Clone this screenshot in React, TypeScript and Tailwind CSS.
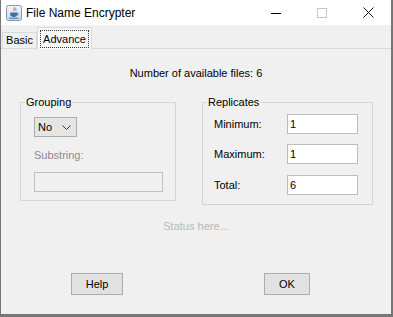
import React from 'react';

const FONT = { fontFamily: '"Liberation Sans", Arial, sans-serif' };

function JavaIcon() {
  return (
    <svg width="16" height="16" viewBox="0 0 16 16" className="ml-[5px] shrink-0">
      <defs>
        <linearGradient id="jbg" x1="0" y1="0" x2="0" y2="1">
          <stop offset="0" stopColor="#f3f7fb" />
          <stop offset="1" stopColor="#c9d7e6" />
        </linearGradient>
      </defs>
      <rect x="0.5" y="0.5" width="15" height="15" rx="2" fill="url(#jbg)" stroke="#8298b0" />
      <path d="M8.2 2.2c1.4 1.2-1.6 2 -0.2 3.6M9.8 3.4c0.8 0.9-1 1.4 0 2.4" fill="none" stroke="#e05a1c" strokeWidth="1" />
      <path d="M4.2 7.4h7v1.8c0 1.8-1.6 2.8-3.5 2.8s-3.5-1-3.5-2.8z" fill="#3a6ea5" />
      <path d="M11.2 8.2c1.4 0 1.4 1.8 0 1.8" fill="none" stroke="#3a6ea5" strokeWidth="0.9" />
      <path d="M3.2 13.2h9.4" stroke="#3a6ea5" strokeWidth="1" />
    </svg>
  );
}

function WindowButtons() {
  return (
    <div className="ml-auto flex h-full">
      <div className="flex w-[46px] items-center justify-center">
        <svg width="10" height="10" viewBox="0 0 10 10">
          <path d="M0 5.5h10" stroke="#000" strokeWidth="1" />
        </svg>
      </div>
      <div className="flex w-[46px] items-center justify-center">
        <svg width="10" height="10" viewBox="0 0 10 10">
          <rect x="0.5" y="0.5" width="9" height="9" fill="none" stroke="#c4c4c4" strokeWidth="1" />
        </svg>
      </div>
      <div className="flex w-[46px] items-center justify-center">
        <svg width="11" height="11" viewBox="0 0 11 11">
          <path d="M0.5 0.5l10 10M10.5 0.5l-10 10" stroke="#111" strokeWidth="1" />
        </svg>
      </div>
    </div>
  );
}

function TextBox({ value }: { value: string }) {
  return (
    <div className="flex h-[20px] w-[71px] items-center border border-[#bcbcbc] bg-white pl-[2px] text-[11px] text-black">
      {value}
    </div>
  );
}

const REPLICATES = [
  { label: 'Minimum:', value: '1', gap: 'mt-[5px]' },
  { label: 'Maximum:', value: '1', gap: 'mt-[10px]' },
  { label: 'Total:', value: '6', gap: 'mt-[11px]' },
];

export default function App() {
  return (
    <div className="h-[317px] w-[393px] bg-white text-black" style={FONT}>
      <div className="flex h-full flex-col border-b-[3px] border-l border-r-2 border-[#767676] bg-[#f0f0f0]">
        {/* Barre de titre */}
        <div className="flex h-[25px] shrink-0 items-center bg-white">
          <JavaIcon />
          <span className="ml-[4px] text-[12px]">File Name Encrypter</span>
          <WindowButtons />
        </div>

        {/* Onglets */}
        <div className="flex h-[23px] shrink-0 items-end pl-[1px]">
          <div className="flex h-[16px] w-[35px] items-center justify-center border border-b-0 border-[#d9d9d9] bg-[#f0f0f0] text-[11px]">
            Basic
          </div>
          <div className="relative z-10 -mb-px flex h-[22px] w-[55px] items-start justify-center border border-b-0 border-[#d9d9d9] bg-[#f9f9f9] pt-[2px] text-[11px]">
            <span className="border border-dotted border-[#333] px-[2px] leading-[16px]">Advance</span>
          </div>
        </div>

        {/* Contenu */}
        <div className="flex flex-1 flex-col border-t border-[#d9d9d9]">
          <p className="mt-[17px] text-center text-[11px] leading-[14px]">Number of available files: 6</p>

          <div className="mt-[15px] flex items-start">
            <fieldset className="ml-[19px] w-[156px] border border-[#d5d5d5] pb-[8px] pl-[13px]">
              <legend className="ml-[-9px] px-[1px] text-[11px] leading-[14px]">Grouping</legend>
              <div className="mt-[8px] flex h-[20px] w-[43px] items-center justify-between border border-[#acacac] bg-[#e5e5e5] pl-[3px] pr-[5px] text-[11px]">
                <span>No</span>
                <svg width="9" height="5" viewBox="0 0 9 5">
                  <path d="M0.5 0.5l4 4 4-4" fill="none" stroke="#333" strokeWidth="1" />
                </svg>
              </div>
              <p className="mt-[11px] text-[11px] leading-[14px] text-[#8c8c8c]">Substring:</p>
              <div className="mt-[10px] h-[20px] w-[129px] border border-[#c0c0c0] bg-[#f0f0f0]" />
            </fieldset>

            <fieldset className="ml-[26px] w-[171px] border border-[#d5d5d5] pb-[9px] pl-[11px]">
              <legend className="ml-[-7px] px-[1px] text-[11px] leading-[14px]">Replicates</legend>
              {REPLICATES.map((row) => (
                <div key={row.label} className={`${row.gap} flex items-center`}>
                  <span className="w-[73px] text-[11px]">{row.label}</span>
                  <TextBox value={row.value} />
                </div>
              ))}
            </fieldset>
          </div>

          <p className="mt-[14px] text-center text-[11px] leading-[14px] text-[#b8b8b8]">Status here...</p>

          <div className="mt-[40px] flex">
            <button
              type="button"
              className="ml-[70px] h-[22px] w-[52px] border border-[#adadad] bg-[#e1e1e1] text-[11px]"
            >
              Help
            </button>
            <button
              type="button"
              className="ml-[141px] h-[22px] w-[46px] border border-[#adadad] bg-[#e1e1e1] text-[11px]"
            >
              OK
            </button>
          </div>
        </div>
      </div>
    </div>
  );
}
